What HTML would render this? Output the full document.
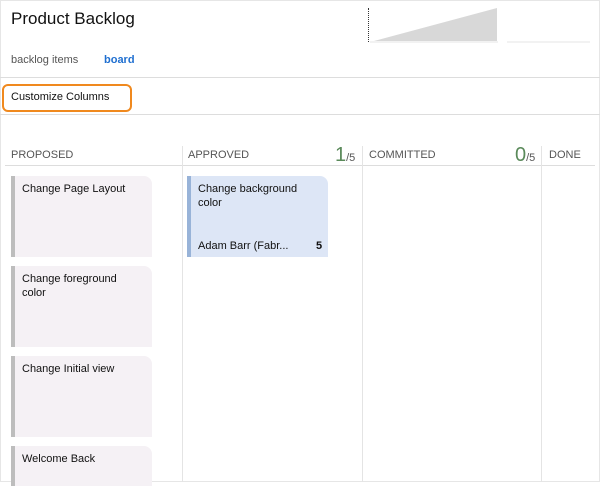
<!DOCTYPE html>
<html><head><style>
body{margin:0;width:600px;height:482px;overflow:hidden;background:#fff;font-family:"Liberation Sans",sans-serif;position:relative;color:#222}
.a{position:absolute}
.card{position:absolute;background:#f5f1f5;border-left:4px solid #bdbdbd;border-radius:0 8px 0 0;font-size:11px;color:#111;box-sizing:border-box;padding:6px 0 0 7px;line-height:14px}
.hd{position:absolute;top:149px;font-size:11px;color:#555}
.cnt{position:absolute;top:144px;color:#5a8a5a;font-size:20px;font-weight:300}
.cnt small{font-size:11px;color:#555}
</style></head><body>
<div class="a" style="left:0;top:0;width:598px;height:480px;border:1px solid #e6e6e6"></div>
<div class="a" style="left:11px;top:9px;font-size:17px;color:#111">Product Backlog</div>
<div class="a" style="left:368px;top:8px;height:34px;border-left:1px dotted #333"></div>
<svg class="a" style="left:370px;top:7px" width="230" height="36"><polygon points="4,34 127,1 127,34" fill="#d8d8d8"/><line x1="137" y1="35" x2="220" y2="35" stroke="#e6e6e6"/><line x1="0" y1="35" x2="128" y2="35" stroke="#e6e6e6"/></svg>
<div class="a" style="left:11px;top:54px;font-size:11px;color:#555">backlog items</div>
<div class="a" style="left:104px;top:54px;font-size:11px;color:#1f6fd0;font-weight:bold">board</div>
<div class="a" style="left:0;top:77px;width:600px;border-top:1px solid #ddd"></div>
<div class="a" style="left:2px;top:84px;width:126px;height:24px;border:2px solid #f0891e;border-radius:6px"></div>
<div class="a" style="left:11px;top:91px;font-size:11px;color:#111">Customize Columns</div>
<div class="a" style="left:0;top:114px;width:600px;border-top:1px solid #ddd"></div>
<div class="hd" style="left:11px">PROPOSED</div>
<div class="hd" style="left:188px">APPROVED</div>
<div class="hd" style="left:369px">COMMITTED</div>
<div class="hd" style="left:549px">DONE</div>
<div class="cnt" style="left:335px">1<small>/5</small></div>
<div class="cnt" style="left:515px">0<small>/5</small></div>
<div class="a" style="left:5px;top:165px;width:590px;border-top:1px solid #ddd"></div>
<div class="a" style="left:182px;top:146px;height:336px;border-left:1px solid #e4e4e4"></div>
<div class="a" style="left:362px;top:146px;height:336px;border-left:1px solid #e4e4e4"></div>
<div class="a" style="left:541px;top:146px;height:336px;border-left:1px solid #e4e4e4"></div>
<div class="card" style="left:11px;top:176px;width:141px;height:81px">Change Page Layout</div>
<div class="card" style="left:11px;top:266px;width:141px;height:81px">Change foreground<br>color</div>
<div class="card" style="left:11px;top:356px;width:141px;height:81px">Change Initial view</div>
<div class="card" style="left:11px;top:446px;width:141px;height:40px">Welcome Back</div>
<div class="card" style="left:187px;top:176px;width:141px;height:81px;background:#dde6f6;border-left-color:#98b3d8">Change background<br>color
<div class="a" style="left:7px;top:63px">Adam Barr (Fabr...</div><div class="a" style="left:125px;top:63px;font-weight:bold">5</div></div>
</body></html>
